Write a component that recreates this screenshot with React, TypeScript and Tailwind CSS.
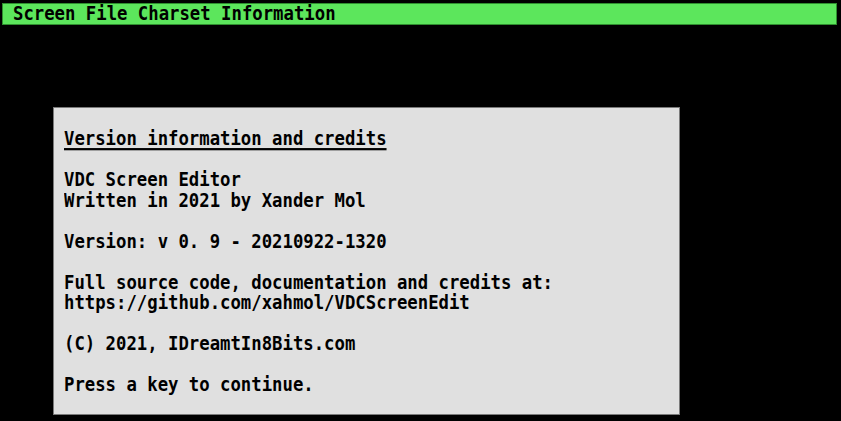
import React from 'react';

const lines: { text: string; underline?: boolean }[] = [
  { text: 'Version information and credits', underline: true },
  { text: '' },
  { text: 'VDC Screen Editor' },
  { text: 'Written in 2021 by Xander Mol' },
  { text: '' },
  { text: 'Version: v 0. 9 - 20210922-1320' },
  { text: '' },
  { text: 'Full source code, documentation and credits at:' },
  { text: 'https://github.com/xahmol/VDCScreenEdit' },
  { text: '' },
  { text: '(C) 2021, IDreamtIn8Bits.com' },
  { text: '' },
  { text: 'Press a key to continue.' },
];

export default function App() {
  return (
    <div
      className="w-[841px] h-[421px] bg-black pt-[3px] overflow-hidden"
      style={{ fontFamily: '"DejaVu Sans Mono", "Liberation Mono", monospace' }}
    >
      <div className="ml-[2px] w-[835px] h-[22px] bg-[#5ce65c] border border-[#2f8f2f] flex items-center pl-[10px]">
        <span className="text-[17.3px] font-bold text-black whitespace-pre leading-none scale-y-[1.12]">
          Screen File Charset Information
        </span>
      </div>
      <div className="mt-[82px] ml-[53px] w-[627px] h-[308px] bg-[#e0e0e0] border border-[#7a7a7a] pt-[20px] pl-[10px]">
        {lines.map((l, i) => (
          <div
            key={i}
            className={
              'h-[20.5px] leading-[20.5px] text-[17.3px] font-bold text-black whitespace-pre scale-y-[1.12] ' +
              (l.underline ? 'underline decoration-2 underline-offset-[3px]' : '')
            }
          >
            {l.text}
          </div>
        ))}
      </div>
    </div>
  );
}
